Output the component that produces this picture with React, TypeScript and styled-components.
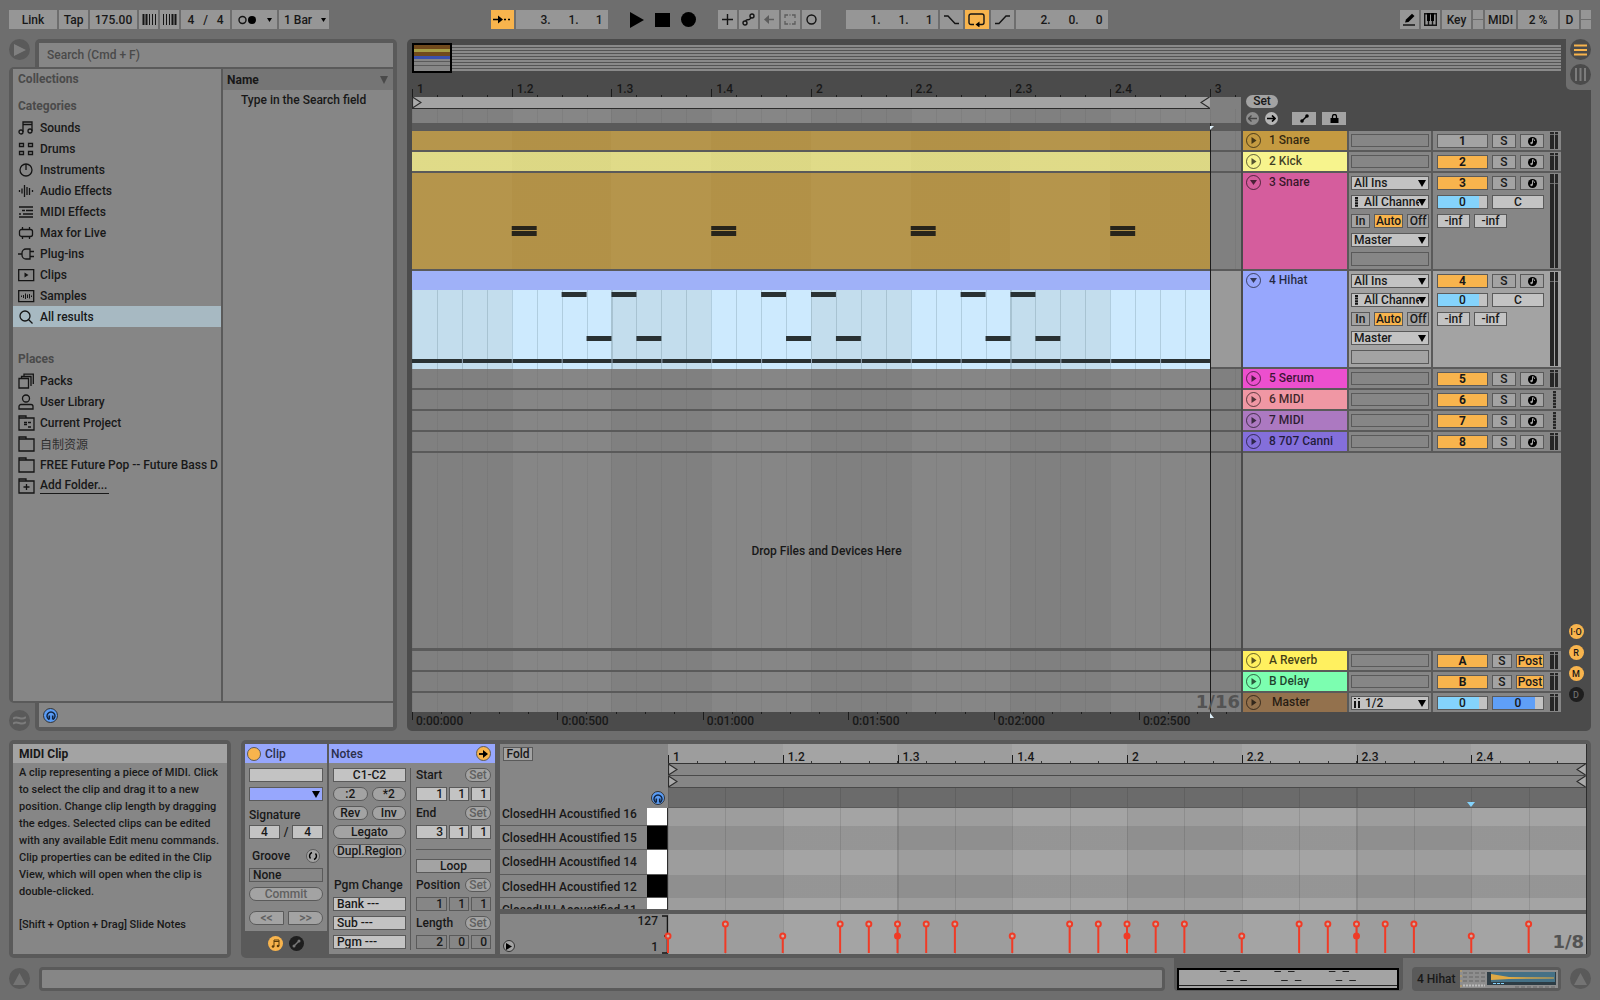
import React from "react";
import styled, { createGlobalStyle, css } from "styled-components";

const c = {
  page: "#6e6e6e",
  frame: "#5a5a5a",
  dark: "#4b4b4b",
  panel: "#868686",
  lane: "#808080",
  light: "#a3a3a3",
  field: "#c3c3c3",
  button: "#969696",
  orange: "#f8b44d",
  blue: "#97a7fd",
  sky: "#84d3fc",
  ink: "#181818",
};

const Global = createGlobalStyle`
  * { box-sizing: border-box; }
  body { margin: 0; background: ${c.page}; }
  body, button, input, select {
    font-family: Roboto, "Noto Sans CJK SC", sans-serif;
    font-size: 12px;
    font-weight: 500;
    color: ${c.ink};
  }
  button, input, select { margin: 0; padding: 0; border: 0; border-radius: 0; appearance: none; min-width: 0; }
  input:focus, select:focus, button:focus { outline: none; }
  svg { display: block; flex: none; }
  p { margin: 0; }
`;

const Page = styled.div`
  display: flex;
  flex-direction: column;
  min-height: 100vh;
  padding: 0 9px;
`;

/* ---------- control bar ---------- */

const ControlBar = styled.header`
  display: flex;
  padding: 10px 0;
`;
const Spacer = styled.div<{ $grow: number }>`
  flex: ${(p) => p.$grow} 1 0;
`;
const Group = styled.div`
  display: flex;
  gap: 2px;
`;
const BarButton = styled.button<{ $w: number; $on?: boolean }>`
  width: ${(p) => p.$w}px;
  height: 19px;
  display: flex;
  align-items: center;
  justify-content: center;
  white-space: nowrap;
  background: ${(p) => (p.$on ? c.orange : c.button)};
`;
const BarInput = styled.input<{ $w: number }>`
  width: ${(p) => p.$w}px;
  height: 19px;
  background: ${c.button};
  text-align: center;
`;
const BarFields = styled.div`
  display: flex;
  align-items: center;
  justify-content: flex-end;
  gap: 4px;
  width: 92px;
  height: 19px;
  padding-right: 5px;
  background: ${c.button};
`;
const BarDigit = styled.input<{ $w: number }>`
  width: ${(p) => p.$w}px;
  background: transparent;
  text-align: right;
`;
const BarSelectBox = styled.div`
  position: relative;
  width: 50px;
  height: 19px;
  background: ${c.button};
`;
const BarSelect = styled.select`
  width: 100%;
  height: 19px;
  padding-left: 5px;
  background: transparent;
`;
const ArrowOver = styled.span<{ $right: number }>`
  position: absolute;
  right: ${(p) => p.$right}px;
  top: 0;
  bottom: 0;
  display: flex;
  align-items: center;
  pointer-events: none;
`;
const TransportGroup = styled.div`
  display: flex;
  margin: 0 16px;
`;
const LoopGroup = styled(Group)`
  margin-left: 25px;
`;
const Transport = styled.button`
  width: 26px;
  height: 19px;
  background: transparent;
  display: flex;
  align-items: center;
  justify-content: center;
`;
const Leds = styled.div`
  display: flex;
  flex-direction: column;
  gap: 1px;
  width: 10px;
  span { flex: 1; background: ${c.button}; }
`;

const Down = ({ w = 8, h = 7, fill = "#000" }: { w?: number; h?: number; fill?: string }) => (
  <svg width={w} height={h} viewBox="0 0 8 7" preserveAspectRatio="none"><path d="M0 0h8L4 7z" fill={fill} /></svg>
);

const Digits = ({ label, values }: { label: string; values: string[] }) => (
  <BarFields>
    {values.map((v, i) => (
      <BarDigit key={i} $w={i === 2 ? 20 : 24} defaultValue={v} aria-label={`${label} ${i + 1}`} />
    ))}
  </BarFields>
);

const stroke = { fill: "none", stroke: "#141414", strokeWidth: 1.4 } as const;

function TopBar() {
  return (
    <ControlBar>
      <Group>
        <BarButton $w={48}>Link</BarButton>
        <BarButton $w={29}>Tap</BarButton>
        <BarInput $w={47} defaultValue="175.00" aria-label="Tempo" />
        <BarButton $w={19} aria-label="Nudge down">
          <svg width="14" height="11"><path d="M1.5 0v11M4.5 0v11" stroke="#141414" strokeWidth="2" /><path d="M7.5 0v11M10.5 0v11M13.5 0v11" stroke="#141414" /></svg>
        </BarButton>
        <BarButton $w={19} aria-label="Nudge up">
          <svg width="14" height="11"><path d="M.5 0v11M3.5 0v11M6.5 0v11" stroke="#141414" /><path d="M9.5 0v11M12.5 0v11" stroke="#141414" strokeWidth="2" /></svg>
        </BarButton>
        <BarInput $w={49} defaultValue="4   /   4" aria-label="Time signature" />
        <BarButton $w={45} aria-label="Metronome">
          <svg width="34" height="10"><circle cx="4.5" cy="5" r="3.5" {...stroke} /><circle cx="14" cy="5" r="4" /><path d="M29 3h5l-2.5 4z" /></svg>
        </BarButton>
        <BarSelectBox>
          <BarSelect aria-label="Quantization"><option>1 Bar</option></BarSelect>
          <ArrowOver $right={3}><Down w={5} h={4} /></ArrowOver>
        </BarSelectBox>
      </Group>
      <Spacer $grow={162} />
      <Group>
        <BarButton $w={23} $on aria-label="Follow">
          <svg width="18" height="9"><path d="M0 4.5h7M11 4.5h2M15 4.5h2" stroke="#000" strokeWidth="1.5" /><path d="M5 .5l5 4-5 4z" /></svg>
        </BarButton>
        <Digits label="Position" values={["3.", "1.", "1"]} />
      </Group>
      <TransportGroup>
        <Transport aria-label="Play"><svg width="14" height="16"><path d="M0 0l14 8-14 8z" /></svg></Transport>
        <Transport aria-label="Stop"><svg width="15" height="14"><path d="M0 0h15v14H0z" /></svg></Transport>
        <Transport aria-label="Record"><svg width="15" height="15"><circle cx="7.5" cy="7.5" r="7.5" /></svg></Transport>
      </TransportGroup>
      <Group>
        <BarButton $w={19} aria-label="Overdub"><svg width="11" height="11"><path d="M5.5 0v11M0 5.5h11" {...stroke} /></svg></BarButton>
        <BarButton $w={19} aria-label="Automation arm"><svg width="13" height="13"><circle cx="3" cy="10" r="2" {...stroke} /><circle cx="10" cy="3" r="2" {...stroke} /><path d="M3.5 8C5 5 7 9 9 4.5" {...stroke} /></svg></BarButton>
        <BarButton $w={19} aria-label="Re-enable automation"><svg width="10" height="9"><path d="M3 4.5h7" stroke="#5c5c5c" strokeWidth="1.5" /><path d="M5 0v9L0 4.5z" fill="#5c5c5c" /></svg></BarButton>
        <BarButton $w={19} aria-label="Capture"><svg width="12" height="11"><path d="M1 4V1h3M8 1h3v3M11 7v3H8M4 10H1V7M5.5 1h1M5.5 10h1" fill="none" stroke="#5c5c5c" strokeWidth="1.3" /></svg></BarButton>
        <BarButton $w={19} aria-label="Session record"><svg width="11" height="11"><circle cx="5.5" cy="5.5" r="4.5" {...stroke} /></svg></BarButton>
      </Group>
      <LoopGroup>
        <Digits label="Loop start" values={["1.", "1.", "1"]} />
        <BarButton $w={23} aria-label="Punch in"><svg width="15" height="10"><path d="M0 1h4l7 7.5h4" {...stroke} /></svg></BarButton>
        <BarButton $w={24} $on aria-label="Loop"><svg width="17" height="14"><path d="M6 11.500H3a2 2 0 0 1-2-2V3a2 2 0 0 1 2-2h11a2 2 0 0 1 2 2v6.500a2 2 0 0 1-2 2h-4" {...stroke} /><path d="M11.500 8.500v6L7.500 11.500z" /></svg></BarButton>
        <BarButton $w={23} aria-label="Punch out"><svg width="15" height="10"><path d="M0 8.5h4L11 1h4" {...stroke} /></svg></BarButton>
        <Digits label="Loop length" values={["2.", "0.", "0"]} />
      </LoopGroup>
      <Spacer $grow={293} />
      <Group>
        <BarButton $w={19} aria-label="Draw mode"><svg width="13" height="13"><path d="M2 9.500l1-3L9 .8l2.500 2.200-6 6z" /><path d="M0 12h12" stroke="#000" strokeWidth="1.3" /></svg></BarButton>
        <BarButton $w={19} aria-label="Computer keyboard"><svg width="13" height="13"><path d="M.7.7h11.600v11.600H.7zM4.500 7v5M8.500 7v5" {...stroke} /><path d="M3 0h3v8H3zM7 0h3v8H7z" /></svg></BarButton>
        <BarButton $w={29}>Key</BarButton>
        <Leds><span /><span /></Leds>
        <BarButton $w={31}>MIDI</BarButton>
        <BarButton $w={40}>2 %</BarButton>
        <BarButton $w={19}>D</BarButton>
        <Leds><span /><span /></Leds>
      </Group>
    </ControlBar>
  );
}

/* ---------- browser ---------- */

const Workspace = styled.main`
  display: flex;
  flex: 1;
  gap: 10px;
`;
const Browser = styled.section`
  display: flex;
  flex-direction: column;
  width: 388px;
  flex: none;
`;
const BrowserEdge = styled.div<{ $end?: boolean }>`
  display: flex;
  gap: 5px;
  align-items: ${(p) => (p.$end ? "flex-end" : "flex-start")};
`;
const EdgeFrame = styled.div<{ $end?: boolean }>`
  flex: 1;
  padding: ${(p) => (p.$end ? "0 4px 4px" : "4px 4px 0")};
  background: ${c.frame};
  border-radius: ${(p) => (p.$end ? "0 0 5px 5px" : "5px 5px 0 0")};
`;
const Search = styled.input`
  display: block;
  width: 100%;
  height: 24px;
  padding: 0 8px;
  background: ${c.panel};
  &::placeholder { color: #4a4a4a; opacity: 1; }
`;
const FooterBox = styled.div`
  display: flex;
  align-items: center;
  height: 24px;
  padding-left: 4px;
  background: ${c.panel};
`;
const Round = styled.button<{ $size: number; $bg: string; $line?: string }>`
  display: flex;
  align-items: center;
  justify-content: center;
  flex: none;
  width: ${(p) => p.$size}px;
  height: ${(p) => p.$size}px;
  border-radius: 50%;
  background: ${(p) => p.$bg};
  border: ${(p) => (p.$line ? `1px solid ${p.$line}` : "0")};
  font-size: 9px;
`;
const DarkRound = styled(Round)`
  color: #6a6a6a;
`;
const BrowserBody = styled.div`
  display: flex;
  flex: 1;
  gap: 2px;
  padding: 2px 4px;
  background: ${c.frame};
  border-radius: 5px 0 0 5px;
`;
const Sidebar = styled.nav`
  width: 208px;
  background: ${c.panel};
`;
const SideTitle = styled.div<{ $h: number }>`
  height: ${(p) => p.$h}px;
  padding-left: 5px;
  line-height: 20px;
  color: #4a4a4a;
  font-weight: 700;
`;
const SideLink = styled.a<{ $on?: boolean; $thin?: boolean }>`
  display: flex;
  align-items: center;
  gap: 5px;
  height: 21px;
  padding-left: 5px;
  white-space: nowrap;
  text-decoration: none;
  font-weight: ${(p) => (p.$thin ? 400 : 500)};
  color: ${(p) => (p.$thin ? "#303030" : c.ink)};
  background: ${(p) => (p.$on ? "#a7b9c2" : "transparent")};
`;
const AddLabel = styled.span`
  padding: 1px 2px 0 0;
  border-bottom: 1px solid ${c.ink};
  line-height: 15px;
`;
const SideGap = styled.div`
  height: 22px;
`;
const Results = styled.div`
  flex: 1;
  background: ${c.panel};
`;
const ResultsHead = styled.div`
  display: flex;
  align-items: center;
  justify-content: space-between;
  height: 21px;
  padding: 0 5px 0 4px;
  background: #757575;
  font-weight: 700;
`;
const ResultsHint = styled.div`
  padding-left: 18px;
  line-height: 20px;
`;

const folder = "M1 15V1h7v2h8v12zM1 3h7";
const icons: Record<string, React.ReactNode> = {
  Sounds: <><circle cx="3" cy="12" r="2" /><circle cx="12" cy="11" r="2" /><path d="M5 12V2h9v9M5 4.500h9" /></>,
  Drums: <path d="M1.500 2.500h4v3h-4zM10.500 2.500h4v3h-4zM1.500 10.500h4v3h-4zM10.500 10.500h4v3h-4z" />,
  Instruments: <><circle cx="8" cy="8" r="6" /><path d="M8 2v6" /></>,
  "Audio Effects": <path d="M1.500 7v2M4 5.500v5M6.500 2v12M9 4v8M11.500 5v7M14.500 7v2" />,
  "MIDI Effects": <path d="M1 3h14M1 13h14M4 6.500h3M8 6.500h7M5 10h10M1 10h2" />,
  "Max for Live": <path d="M3.500 4.500h9a2 2 0 0 1 2 2v3a2 2 0 0 1-2 2h-9a2 2 0 0 1-2-2v-3a2 2 0 0 1 2-2zM4.500 2v2.500M11.500 2v2.500M4.500 11.500V14M11.500 11.500V14" />,
  "Plug-ins": <path d="M0 8h4M12 3H8a4 4 0 0 0-4 4v2a4 4 0 0 0 4 4h4zM12 5.500h4M12 10.500h4" />,
  Clips: <><path d="M.7 2.700h15v11H.7z" /><path d="M6.500 5.500v5L10.500 8z" fill="#141414" stroke="none" /></>,
  Samples: <><path d="M.7 2.700h15v11H.7z" /><path d="M3.500 7.500v1.500M5.500 7v3M7.500 5.500v5.500M9.500 6.500v3.500M11.500 6v4.500M13.500 7.500v1.500" strokeWidth="1" /></>,
  "All results": <><circle cx="7" cy="7" r="5" /><path d="M10.500 10.500l4 4" /></>,
  Packs: <path d="M1 5.500h9.500V15H1zM3.500 5.500V3.500H13V13M6 3.500V1.200h9.300V11" />,
  "User Library": <><circle cx="8" cy="4.500" r="3.500" /><path d="M1 15v-2.500a2 2 0 0 1 2-2h10a2 2 0 0 1 2 2V15z" /></>,
  "Current Project": <><path d={folder} /><path d="M6 7.500h3M10 7.500h3M6 9.500h3M10 12h3" /></>,
  自制资源: <path d={folder} />,
  "FREE Future Pop -- Future Bass D": <path d={folder} />,
  "Add Folder...": <><path d={folder} /><path d="M8.500 6v6M5.500 9h6" /></>,
};
const SideIcon = ({ name }: { name: string }) => (
  <svg width="17" height="16" viewBox="0 0 17 16" fill="none" stroke="#141414" strokeWidth="1.3">{icons[name]}</svg>
);
const Headphones = ({ size }: { size: number }) => (
  <Round $size={size} $bg="#5a9cf5" $line="#333" aria-label="Preview">
    <svg width="10" height="10" fill="none" stroke="#10233f" strokeWidth="1.4"><path d="M3 9.500A4 4 0 1 1 7 9.500" /><path d="M3.300 5.500v4M6.700 5.500v4" strokeWidth="1.600" /></svg>
  </Round>
);

function BrowserPane() {
  return (
    <Browser>
      <BrowserEdge>
        <Round $size={21} $bg={c.frame} aria-label="Hide browser"><svg width="13" height="12"><path d="M1 0l12 6-12 6z" fill="#808080" /></svg></Round>
        <EdgeFrame><Search placeholder="Search (Cmd + F)" aria-label="Search" /></EdgeFrame>
      </BrowserEdge>
      <BrowserBody>
        <Sidebar>
          <SideTitle $h={27}>Collections</SideTitle>
          <SideTitle $h={21}>Categories</SideTitle>
          {["Sounds", "Drums", "Instruments", "Audio Effects", "MIDI Effects", "Max for Live", "Plug-ins", "Clips", "Samples", "All results"].map((n) => (
            <SideLink key={n} href="#" $on={n === "All results"}><SideIcon name={n} />{n}</SideLink>
          ))}
          <SideGap />
          <SideTitle $h={21}>Places</SideTitle>
          {["Packs", "User Library", "Current Project", "自制资源", "FREE Future Pop -- Future Bass D"].map((n) => (
            <SideLink key={n} href="#" $thin={n === "自制资源"}><SideIcon name={n} />{n}</SideLink>
          ))}
          <SideLink href="#"><SideIcon name="Add Folder..." /><AddLabel>Add Folder...</AddLabel></SideLink>
        </Sidebar>
        <Results>
          <ResultsHead>Name<Down w={8} h={8} fill="#4a4a4a" /></ResultsHead>
          <ResultsHint>Type in the Search field</ResultsHint>
        </Results>
      </BrowserBody>
      <BrowserEdge $end>
        <Round $size={21} $bg={c.frame} aria-label="Groove pool"><svg width="13" height="11" fill="none" stroke="#7c7c7c" strokeWidth="2"><path d="M0 4c4-5 8 3 13-2M0 9c4-5 8 3 13-2" /></svg></Round>
        <EdgeFrame $end><FooterBox><Headphones size={15} /></FooterBox></EdgeFrame>
      </BrowserEdge>
    </Browser>
  );
}

/* ---------- arrangement ---------- */

const Arrangement = styled.section`
  display: flex;
  flex: 1;
  min-width: 0;
  background: ${c.dark};
  border-radius: 5px;
`;
const ArrMain = styled.div`
  flex: 1;
  min-width: 0;
  display: flex;
  flex-direction: column;
  padding: 4px 0 0 5px;
`;
const SideStrip = styled.div`
  display: flex;
  flex-direction: column;
  justify-content: space-between;
  width: 30px;
`;
const ViewSwitch = styled.div`
  display: flex;
  flex-direction: column;
  align-items: flex-end;
  gap: 4px;
  height: 51px;
  margin-left: 5px;
  background: ${c.page};
  border-bottom-left-radius: 5px;
`;
const SectionToggles = styled.div`
  display: flex;
  flex-direction: column;
  align-items: center;
  gap: 6px;
  padding-bottom: 29px;
`;
const Overview = styled.div`
  display: flex;
  align-items: center;
  height: 30px;
`;
const OverviewView = styled.div`
  width: 40px;
  height: 30px;
  border: 2px solid #000;
  background: linear-gradient(#714a1c 0 4px, #a59c45 4px 7px, #714a1c 7px 11px, #3b50ab 11px 14px, ${c.panel} 14px 16px, ${c.frame} 16px 17px, ${c.panel} 17px 20px, ${c.frame} 20px 21px, ${c.panel} 21px 26px);
`;
const OverviewStrips = styled.div`
  flex: 1;
  height: 26px;
  background: repeating-linear-gradient(#8a8a8a 0 2px, #555 2px 3px);
`;
const Columns = styled.div`
  display: flex;
  gap: 2px;
  flex: 1;
`;
const Timeline = styled.div`
  position: relative;
  display: flex;
  flex-direction: column;
  flex: 1;
  min-width: 0;
`;

/* One beat is 12.03% of the visible timeline, one sixteenth a quarter of that. */
const grid = css`
  background-image:
    repeating-linear-gradient(90deg, rgba(0, 0, 0, 0.05) 0 1px, transparent 1px 3.0075%),
    repeating-linear-gradient(90deg, ${c.lane} 0 12.03%, ${c.panel} 12.03% 24.06%);
`;
const Ruler = styled.div`
  display: flex;
  align-items: flex-end;
  height: 24px;
  overflow: hidden;
  background: repeating-linear-gradient(90deg, #1c1c1c 0 1px, transparent 1px 3.0075%) bottom / 100% 2px no-repeat;
`;
const Mark = styled.span<{ $w: string }>`
  flex: none;
  width: ${(p) => p.$w};
  height: 15px;
  padding-left: 5px;
  line-height: 15px;
  white-space: nowrap;
  background: linear-gradient(#1c1c1c, #1c1c1c) left bottom / 1px 8px no-repeat;
`;
const LoopRow = styled.div`
  display: flex;
  height: 12px;
  background: ${c.lane};
`;
const LoopBrace = styled.div`
  display: flex;
  justify-content: space-between;
  width: 96.26%;
  background: ${c.light};
  border-bottom: 1px solid #2c2c2c;
`;
const GridRow = styled.div`
  height: 14px;
  ${grid}
`;
const Locators = styled.div`
  height: 8px;
  background: ${c.frame};
`;
const Lanes = styled.div`
  display: flex;
  flex-direction: column;
  gap: 2px;
  flex: 1;
  background: ${c.frame};
`;
const Lane = styled.div<{ $h: number; $sel?: boolean }>`
  height: ${(p) => p.$h}px;
  ${grid}
  ${(p) => p.$sel && "background: #9a9a9a;"}
`;
const EmptyLane = styled.div`
  flex: 1;
  display: flex;
  align-items: center;
  justify-content: center;
  margin-bottom: 1px;
  ${grid}
`;
const Clip = styled.div<{ $bg: string }>`
  width: 96.26%;
  height: 100%;
  background: repeating-linear-gradient(90deg, rgba(255, 255, 255, 0.02) 0 12.5%, rgba(0, 0, 0, 0.01) 12.5% 25%) ${(p) => p.$bg};
`;
const HihatClip = styled.div`
  display: flex;
  flex-direction: column;
  width: 96.26%;
  height: 98px;
`;
const HihatHead = styled.div`
  height: 19px;
  background: #9fb1f8;
`;
const HihatBody = styled.div`
  flex: 1;
  background:
    repeating-linear-gradient(90deg, rgba(60, 90, 100, 0.2) 0 1px, transparent 1px 3.125%),
    repeating-linear-gradient(90deg, #c3dded 0 12.5%, #cdeafe 12.5% 25%);
`;
const Insert = styled.div`
  position: absolute;
  left: 96.26%;
  top: 50px;
  bottom: 19px;
  width: 1px;
  background: #1c1c1c;
`;
const InsertTip = styled.svg<{ $top?: boolean }>`
  position: absolute;
  left: 0;
  ${(p) => (p.$top ? "top: 3px;" : "bottom: -6px;")}
`;
const Quantum = styled.span<{ $right: number; $bottom: number }>`
  position: absolute;
  right: ${(p) => p.$right}px;
  bottom: ${(p) => p.$bottom}px;
  color: #535353;
  font-family: "DejaVu Sans", sans-serif;
  font-size: 18px;
  font-weight: 700;
  line-height: 20px;
`;
const TimeRuler = styled.div`
  display: flex;
  height: 19px;
  overflow: hidden;
  background: repeating-linear-gradient(90deg, #1c1c1c 0 1px, transparent 1px 3.508%) top / 100% 2px no-repeat;
`;
const TimeMark = styled.span`
  flex: none;
  width: 17.54%;
  padding-left: 4px;
  line-height: 18px;
  background: linear-gradient(#1c1c1c, #1c1c1c) left top / 1px 8px no-repeat;
`;

const Brace = ({ flip }: { flip?: boolean }) => (
  <svg width="10" height="11"><path d={flip ? "M9.500 0L1 5.500l8.500 5.500" : "M.5 0L9 5.500.5 11z"} fill="#aaa" stroke="#2c2c2c" strokeWidth="1.200" /></svg>
);
const beatX = (b: number) => `${b * 12.5}%`;

/* ---------- mixer ---------- */

const Mixer = styled.div`
  display: flex;
  flex-direction: column;
  width: 318px;
  flex: none;
`;
const MixerHead = styled.div`
  display: flex;
  flex-direction: column;
  align-items: flex-start;
  gap: 4px;
  height: 58px;
  padding: 22px 0 0 3px;
`;
const SetTop = styled.button`
  width: 32px;
  height: 13px;
  line-height: 13px;
  border-radius: 7px;
  background: ${c.light};
`;
const HeadRow = styled.div`
  display: flex;
  gap: 6px;
`;
const HeadButton = styled.button`
  display: flex;
  align-items: center;
  justify-content: center;
  width: 24px;
  height: 13px;
  background: ${c.light};
`;
const HeadButtons = styled.div`
  display: flex;
  gap: 6px;
  padding-left: 8px;
`;
const TrackList = styled.div`
  display: flex;
  flex-direction: column;
  gap: 2px;
  flex: 1;
  background: ${c.frame};
`;
const MixerEmpty = styled.div`
  flex: 1;
  margin-bottom: 1px;
  background: ${c.panel};
`;
const MixerFoot = styled.div`
  height: 19px;
`;
const TrackRow = styled.div<{ $h: number }>`
  display: flex;
  gap: 2px;
  height: ${(p) => p.$h}px;
`;
const TrackName = styled.div<{ $bg: string; $indent?: boolean }>`
  display: flex;
  flex: none;
  gap: ${(p) => (p.$indent ? 11 : 8)}px;
  width: 104px;
  padding: 2px 0 0 3px;
  background: ${(p) => p.$bg};
  color: rgba(0, 0, 0, 0.75);
  line-height: 14px;
  white-space: nowrap;
`;
const Cell = styled.div<{ $sel?: boolean }>`
  display: flex;
  flex-direction: column;
  gap: 5px;
  flex: none;
  width: 82px;
  padding: 3px 2px;
  background: ${(p) => (p.$sel ? c.light : c.panel)};
`;
const MixCell = styled.div<{ $sel?: boolean }>`
  display: flex;
  justify-content: space-between;
  flex: 1;
  padding: 0 3px 0 4px;
  background: ${(p) => (p.$sel ? c.light : c.panel)};
`;
const MixControls = styled.div`
  display: flex;
  flex-direction: column;
  gap: 5px;
  padding-top: 3px;
`;
const Line = styled.div<{ $gap?: number; $between?: boolean }>`
  display: flex;
  gap: ${(p) => p.$gap ?? 4}px;
  align-items: center;
  justify-content: ${(p) => (p.$between ? "space-between" : "flex-start")};
  height: 14px;
`;
const boxBase = css`
  height: 14px;
  border: 1px solid ${c.frame};
  line-height: 12px;
`;
const Blank = styled.div`
  ${boxBase}
`;
const Toggle = styled.button<{ $w?: number; $on?: boolean; $dim?: boolean; $bold?: boolean }>`
  ${boxBase}
  display: flex;
  align-items: center;
  justify-content: center;
  width: ${(p) => (p.$w ? `${p.$w}px` : "100%")};
  background: ${(p) => (p.$on ? c.orange : c.light)};
  color: ${(p) => (p.$dim ? "#606060" : c.ink)};
  font-weight: ${(p) => (p.$bold ? 700 : 500)};
  white-space: nowrap;
`;
const Pill = styled(Toggle)<{ $shape?: string }>`
  border-radius: ${(p) => p.$shape ?? "7px"};
`;
const Field = styled.input<{ $w?: number; $bg?: string; $align?: string }>`
  ${boxBase}
  width: ${(p) => (p.$w ? `${p.$w}px` : "100%")};
  padding: 0 3px;
  background: ${(p) => p.$bg ?? c.field};
  text-align: ${(p) => p.$align ?? "center"};
`;
const SelectBox = styled.div<{ $bg?: string }>`
  ${boxBase}
  position: relative;
  display: flex;
  align-items: center;
  background: ${(p) => p.$bg ?? c.field};
  padding-left: 2px;
  gap: 5px;
`;
const Select = styled.select`
  flex: 1;
  height: 12px;
  margin-right: 9px;
  background: transparent;
  line-height: 12px;
`;
const Meter = styled.div<{ $midi?: boolean; $notch: number }>`
  display: flex;
  gap: 1px;
  width: 8px;
  justify-content: center;
  padding: 1px 0;
  span {
    width: ${(p) => (p.$midi ? 3 : 4)}px;
    background: ${(p) =>
      p.$midi
        ? "repeating-linear-gradient(#262626 0 2px, #666 2px 3px)"
        : `linear-gradient(#262626 0 ${p.$notch}px, #6a6a6a ${p.$notch}px ${p.$notch + 1}px, #262626 ${p.$notch + 1}px)`};
  }
`;

const Dots = () => (
  <svg width="5" height="10"><path d="M2.500 0v10" stroke="#141414" strokeWidth="3" strokeDasharray="2 .6" /></svg>
);
const Unfold = ({ open }: { open?: boolean }) => (
  <Round $size={15} $bg="transparent" $line="rgba(0,0,0,.6)" aria-label={open ? "Fold track" : "Unfold track"}>
    <svg width="9" height="9"><path d={open ? "M1 2h7L4.500 7z" : "M2.500 1v7l5-3.500z"} fill="rgba(0,0,0,.65)" /></svg>
  </Round>
);
const Arm = () => (
  <svg width="9" height="9"><circle cx="4.500" cy="4.500" r="4.500" /><circle cx="3.500" cy="6" r="1.200" fill="#a3a3a3" /><path d="M4.500 6V1.500c1 0 2 1 2 2.500" stroke="#a3a3a3" fill="none" /></svg>
);

type Track = { id: string; name: string; color: string; open?: boolean; off?: boolean; sel?: boolean; midi?: boolean; ret?: boolean };
const tracks: Track[] = [
  { id: "1", name: "1 Snare", color: "#c49a41", off: true },
  { id: "2", name: "2 Kick", color: "#f7f48d" },
  { id: "3", name: "3 Snare", color: "#d55d9d", open: true },
  { id: "4", name: "4 Hihat", color: c.blue, open: true, sel: true },
  { id: "5", name: "5 Serum", color: "#ec4fce" },
  { id: "6", name: "6 MIDI", color: "#f097a4", midi: true },
  { id: "7", name: "7 MIDI", color: "#ac79c1", midi: true },
  { id: "8", name: "8 707 Canni", color: "#846fdb" },
];
const returns: Track[] = [
  { id: "A", name: "A Reverb", color: "#fff05f", ret: true },
  { id: "B", name: "B Delay", color: "#7cfeb0", ret: true },
];

function TrackHeader({ t }: { t: Track }) {
  return (
    <TrackRow $h={t.open ? 96 : 19}>
      <TrackName $bg={t.color}><Unfold open={t.open} />{t.name}</TrackName>
      <Cell $sel={t.sel}>
        {t.open && (
          <>
            <SelectBox>
              <Select aria-label={`${t.name} input`}><option>All Ins</option></Select>
              <ArrowOver $right={2}><Down /></ArrowOver>
            </SelectBox>
            <SelectBox>
              <Dots />
              <Select aria-label={`${t.name} channel`}><option>All Channe</option></Select>
              <ArrowOver $right={2}><Down /></ArrowOver>
            </SelectBox>
            <Line $between>
              <Toggle $w={19}>In</Toggle><Toggle $w={30} $on>Auto</Toggle><Toggle $w={22}>Off</Toggle>
            </Line>
            <SelectBox>
              <Select aria-label={`${t.name} output`}><option>Master</option></Select>
              <ArrowOver $right={2}><Down /></ArrowOver>
            </SelectBox>
          </>
        )}
        <Blank />
      </Cell>
      <MixCell $sel={t.sel}>
        <MixControls>
          <Line>
            <Toggle $w={51} $on={!t.off} $bold>{t.id}</Toggle>
            <Toggle $w={t.ret ? 20 : 24}>S</Toggle>
            {t.ret ? <Toggle $w={28} $on>Post</Toggle> : <Toggle $w={24} aria-label="Arm"><Arm /></Toggle>}
          </Line>
          {t.open && (
            <>
              <Line>
                <Field $w={51} $bg={`linear-gradient(90deg, ${c.sky} 84%, ${c.field} 84%)`} defaultValue="0" aria-label="Volume" />
                <Field $w={52} defaultValue="C" aria-label="Pan" />
              </Line>
              <Line>
                <Field $w={33} defaultValue="-inf" aria-label="Send A" />
                <Field $w={33} defaultValue="-inf" aria-label="Send B" />
              </Line>
            </>
          )}
        </MixControls>
        <Meter $midi={t.midi} $notch={t.open ? 9 : 2}><span />{!t.midi && <span />}</Meter>
      </MixCell>
    </TrackRow>
  );
}

function MixerPane() {
  return (
    <Mixer>
      <MixerHead>
        <SetTop>Set</SetTop>
        <HeadRow>
          <Round $size={13} $bg="#8c8c8c" aria-label="Previous locator"><svg width="9" height="7"><path d="M0 3.500h9M3.500.500l-3 3 3 3" fill="none" stroke="#444" strokeWidth="1.300" /></svg></Round>
          <Round $size={13} $bg="#b5b5b5" aria-label="Next locator"><svg width="9" height="7"><path d="M0 3.500h8M5 .5l3 3-3 3" fill="none" stroke="#000" strokeWidth="1.700" /></svg></Round>
          <HeadButtons>
            <HeadButton aria-label="Automation mode"><svg width="9" height="9"><path d="M2 7l5-5" stroke="#000" strokeWidth="1.400" /><circle cx="2" cy="7" r="1.800" /><circle cx="7" cy="2" r="1.800" /></svg></HeadButton>
            <HeadButton aria-label="Lock envelopes"><svg width="9" height="9"><path d="M.5 4h8v5h-8z" /><path d="M2.500 4V2.500a2 2 0 0 1 4 0V4" fill="none" stroke="#000" strokeWidth="1.300" /></svg></HeadButton>
          </HeadButtons>
        </HeadRow>
      </MixerHead>
      <TrackList>
        {tracks.map((t) => <TrackHeader key={t.id} t={t} />)}
        <MixerEmpty />
        {returns.map((t) => <TrackHeader key={t.id} t={t} />)}
        <TrackRow $h={19}>
          <TrackName $bg="#93714d" $indent><Unfold />Master</TrackName>
          <Cell>
            <SelectBox>
              <svg width="6" height="10"><path d="M1 0v1M1 3v7M5 0v1M5 3v7" stroke="#141414" strokeWidth="2" /></svg>
              <Select aria-label="Master output"><option>1/2</option></Select>
              <ArrowOver $right={2}><Down /></ArrowOver>
            </SelectBox>
          </Cell>
          <MixCell>
            <MixControls>
              <Line>
                <Field $w={51} $bg={`linear-gradient(90deg, ${c.sky} 84%, ${c.field} 84%)`} defaultValue="0" aria-label="Master volume" />
                <Field $w={52} $bg={`linear-gradient(90deg, #5f9ff7 84%, ${c.field} 84%)`} defaultValue="0" aria-label="Cue volume" />
              </Line>
            </MixControls>
            <Meter $notch={2}><span /><span /></Meter>
          </MixCell>
        </TrackRow>
      </TrackList>
      <MixerFoot />
    </Mixer>
  );
}

const labels = ["1", "1.2", "1.3", "1.4", "2", "2.2", "2.3", "2.4"];
const hatStarts = [1.5, 3.5, 5.5];

function ArrangementPane() {
  return (
    <Arrangement>
      <ArrMain>
        <Overview><OverviewView /><OverviewStrips /></Overview>
        <Columns>
          <Timeline>
            <Ruler>{[...labels, "3"].map((l) => <Mark key={l} $w={l === "3" ? "3%" : "12.03%"}>{l}</Mark>)}</Ruler>
            <LoopRow><LoopBrace><Brace /><Brace flip /></LoopBrace></LoopRow>
            <GridRow />
            <Locators />
            <Lanes>
              <Lane $h={19}><Clip $bg="#b49348" /></Lane>
              <Lane $h={19}><Clip $bg="#dfda86" /></Lane>
              <Lane $h={96}>
                <Clip $bg="#b49348">
                  <svg width="100%" height="96">
                    {[1, 3, 5, 7].map((b) => (
                      <g key={b} fill="#27241b">
                        <rect x={beatX(b)} y="53" width="3.125%" height="4" />
                        <rect x={beatX(b)} y="58" width="3.125%" height="5" />
                      </g>
                    ))}
                  </svg>
                </Clip>
              </Lane>
              <Lane $h={96} $sel>
                <HihatClip>
                  <HihatHead />
                  <HihatBody>
                    <svg width="100%" height="79" fill="#293133">
                      {hatStarts.map((b) => (
                        <g key={b}>
                          <rect x={beatX(b)} y="2" width="3.125%" height="5" />
                          <rect x={beatX(b + 0.5)} y="2" width="3.125%" height="5" />
                          <rect x={beatX(b + 0.25)} y="46" width="3.125%" height="5" />
                          <rect x={beatX(b + 0.75)} y="46" width="3.125%" height="5" />
                        </g>
                      ))}
                      <rect x="0" y="69" width="100%" height="4" />
                      {Array.from({ length: 15 }, (_, i) => (
                        <rect key={i} x={beatX((i + 1) / 2)} y="69" width="1" height="4" fill="#9ab" />
                      ))}
                    </svg>
                  </HihatBody>
                </HihatClip>
              </Lane>
              <Lane $h={19} /><Lane $h={19} /><Lane $h={19} /><Lane $h={19} />
              <EmptyLane>Drop Files and Devices Here</EmptyLane>
              <Lane $h={19} /><Lane $h={19} /><Lane $h={19} />
            </Lanes>
            <TimeRuler>{["0:00:000", "0:00:500", "0:01:000", "0:01:500", "0:02:000", "0:02:500"].map((t) => <TimeMark key={t}>{t}</TimeMark>)}</TimeRuler>
            <Insert>
              <InsertTip $top width="4" height="4"><path d="M0 0h4L0 4z" fill="#dff1fb" /></InsertTip>
              <InsertTip width="4" height="5"><path d="M0 0l4 5H0z" fill="#dff1fb" /></InsertTip>
            </Insert>
            <Quantum $right={1} $bottom={19}>1/16</Quantum>
          </Timeline>
          <MixerPane />
        </Columns>
      </ArrMain>
      <SideStrip>
        <ViewSwitch>
          <Round $size={21} $bg={c.dark} aria-label="Arrangement view"><svg width="13" height="12"><path d="M0 1.500h13M0 6h13M0 10.500h13" stroke={c.orange} strokeWidth="2" /></svg></Round>
          <Round $size={21} $bg={c.dark} aria-label="Session view"><svg width="11" height="13"><path d="M1 0v13M5.500 0v13M10 0v13" stroke="#7c7c7c" strokeWidth="2" /></svg></Round>
        </ViewSwitch>
        <SectionToggles>
          <Round $size={15} $bg={c.orange}>I·O</Round>
          <Round $size={15} $bg={c.orange}>R</Round>
          <Round $size={15} $bg={c.orange}>M</Round>
          <DarkRound $size={15} $bg="#1e1e1e">D</DarkRound>
        </SectionToggles>
      </SideStrip>
    </Arrangement>
  );
}

/* ---------- detail view ---------- */

const Detail = styled.div`
  display: flex;
  gap: 10px;
  height: 218px;
  margin-top: 9px;
`;
const Info = styled.aside`
  width: 222px;
  flex: none;
  padding: 4px;
  background: ${c.frame};
  border-radius: 5px;
`;
const InfoTitle = styled.div`
  height: 19px;
  padding-left: 6px;
  line-height: 20px;
  background: ${c.light};
  font-weight: 700;
`;
const InfoText = styled.div`
  display: flex;
  flex-direction: column;
  gap: 16px;
  height: 191px;
  padding: 1px 6px;
  background: ${c.panel};
  font-size: 11px;
  line-height: 17px;
  white-space: nowrap;
`;
const ClipFrame = styled.section`
  display: flex;
  flex: 1;
  min-width: 0;
  gap: 2px;
  padding: 4px;
  background: ${c.frame};
  border-radius: 5px;
`;
const ClipColumn = styled.div`
  width: 82px;
  flex: none;
`;
const BoxHead = styled.div`
  display: flex;
  flex: none;
  align-items: center;
  gap: 4px;
  height: 19px;
  padding: 0 4px 0 2px;
  background: ${c.blue};
  color: #2b2f4c;
`;
const BoxTitle = styled.span`
  flex: 1;
`;
const ClipBody = styled.div`
  display: flex;
  flex-direction: column;
  gap: 5px;
  height: 168px;
  padding: 5px 4px;
  background: ${c.panel};
`;
const Label = styled.span<{ $line?: number }>`
  height: 14px;
  line-height: ${(p) => p.$line ?? 14}px;
  white-space: nowrap;
`;
const TabRow = styled.div`
  display: flex;
  justify-content: center;
  gap: 6px;
  padding-top: 5px;
`;
const GrooveLine = styled(Line)`
  margin: 5px 3px 0;
`;
const NudgeLine = styled(Line)`
  margin-top: 5px;
`;
const NotesColumn = styled.div`
  display: flex;
  flex-direction: column;
  width: 166px;
  flex: none;
`;
const NotesBody = styled.div`
  display: flex;
  gap: 4px;
  flex: 1;
  padding: 5px 4px 4px;
  background: ${c.panel};
`;
const NotesLeft = styled.div`
  display: flex;
  flex-direction: column;
  gap: 5px;
  width: 74px;
`;
const NotesRight = styled.div`
  display: flex;
  flex-direction: column;
  gap: 5px;
  flex: 1;
  padding-left: 5px;
  border-left: 1px solid ${c.frame};
`;
const PgmLabel = styled(Label)`
  margin-top: 15px;
  padding-left: 1px;
`;
const Rule = styled.hr`
  width: 100%;
  height: 1px;
  margin: 5px 0 4px;
  border: 0;
  background: ${c.frame};
`;

const Triple = ({ label, values, dim }: { label: string; values: string[]; dim?: boolean }) => (
  <Line $gap={2}>
    {values.map((v, i) => (
      <Field key={i} $w={i ? 20 : 31} $align="right" $bg={dim ? c.panel : undefined} defaultValue={v} aria-label={`${label} ${i + 1}`} />
    ))}
  </Line>
);
const SetLine = ({ label }: { label: string }) => (
  <Line $between><Label>{label}</Label><Pill $w={26} $dim>Set</Pill></Line>
);

const Editor = styled.div`
  display: flex;
  flex: 1;
  min-width: 0;
  margin-left: 3px;
`;
const KeysSide = styled.div`
  display: flex;
  flex-direction: column;
  width: 168px;
  flex: none;
`;
const KeysHead = styled.div`
  display: flex;
  flex-direction: column;
  justify-content: space-between;
  height: 64px;
  padding: 3px;
  background: ${c.panel};
`;
const KeysHeadEnd = styled.div`
  display: flex;
  justify-content: flex-end;
`;
const Keys = styled.div`
  height: 102px;
  display: flex;
  flex-direction: column;
  border-right: 1px solid #2c2c2c;
`;
const KeyRow = styled.div<{ $h: number }>`
  display: flex;
  align-items: ${(p) => (p.$h === 18 ? "flex-end" : "flex-start")};
  height: ${(p) => p.$h}px;
  overflow: hidden;
  background: ${c.panel};
  border-bottom: 1px solid ${c.frame};
`;
const KeyName = styled.span<{ $line: number }>`
  flex: 1;
  padding-left: 2px;
  line-height: ${(p) => p.$line}px;
  white-space: nowrap;
`;
const Key = styled.span<{ $black?: boolean }>`
  align-self: stretch;
  width: 20px;
  background: ${(p) => (p.$black ? "#000" : "#fff")};
`;
const VelScale = styled.div`
  display: flex;
  align-items: flex-end;
  flex: 1;
  margin-top: 4px;
  padding-left: 3px;
  background: ${c.panel};
`;
const VelPlay = styled.div`
  flex: 1;
  padding-bottom: 2px;
`;
const VelLabels = styled.div`
  display: flex;
  flex-direction: column;
  justify-content: space-between;
  align-items: flex-end;
  height: 39px;
  margin-right: 3px;
  line-height: 13px;
`;
const Roll = styled.div`
  display: flex;
  flex-direction: column;
  flex: 1;
  min-width: 0;
  position: relative;
  border-right: 1px solid #2c2c2c;
`;
const rollLines = "repeating-linear-gradient(90deg, rgba(0, 0, 0, 0.1) 0 1px, transparent 1px 6.25%)";
const rollBeats = "repeating-linear-gradient(90deg, #9d9d9d 0 12.5%, #a4a4a4 12.5% 25%)";
const RollRuler = styled.div`
  display: flex;
  align-items: flex-end;
  height: 20px;
  border-bottom: 1px solid #333;
  background: repeating-linear-gradient(90deg, #333 0 1px, transparent 1px 3.125%) bottom / 100% 2px no-repeat, ${rollBeats};
`;
const RollMark = styled(Mark)`
  height: 13px;
  line-height: 14px;
`;
const RollBar = styled.div`
  display: flex;
  justify-content: space-between;
  height: 12px;
  background: ${c.panel};
  border-bottom: 1px solid #4a4a4a;
`;
const RollScrub = styled.div`
  height: 20px;
  background: ${rollLines}, #6b6b6b;
  border-bottom: 1px solid ${c.frame};
`;
const RollRow = styled.div<{ $h: number; $black?: boolean }>`
  height: ${(p) => p.$h}px;
  background: ${rollLines}, ${(p) => (p.$black ? "linear-gradient(rgba(0, 0, 0, 0.09), rgba(0, 0, 0, 0.09))," : "")} ${rollBeats};
`;
const Velocity = styled.div`
  flex: 1;
  margin-top: 4px;
  background: ${rollLines}, ${rollBeats};
  svg { overflow: visible; }
`;
const Playhead = styled.span`
  position: absolute;
  left: 87.5%;
  top: 58px;
  margin-left: -4px;
`;

const keyRows = [
  { n: "16", h: 18 },
  { n: "15", h: 24, black: true },
  { n: "14", h: 25 },
  { n: "12", h: 23, black: true },
  { n: "11", h: 12 },
];
const high = [0.5, 1.5, 1.75, 2, 2.25, 2.5, 3.5, 3.75, 4, 4.25, 4.5, 5.5, 5.75, 6, 6.25, 6.5, 7.5];
const low = [0, 1, 3, 5, 7];

function ClipDetail() {
  return (
    <Detail>
      <Info>
        <InfoTitle>MIDI Clip</InfoTitle>
        <InfoText>
          <p>A clip representing a piece of MIDI. Click<br />to select the clip and drag it to a new<br />position. Change clip length by dragging<br />the edges. Selected clips can be edited<br />with any available Edit menu commands.<br />Clip properties can be edited in the Clip<br />View, which will open when the clip is<br />double-clicked.</p>
          <p>[Shift + Option + Drag] Slide Notes</p>
        </InfoText>
      </Info>
      <ClipFrame>
        <ClipColumn>
          <BoxHead><Round $size={14} $bg={c.orange} $line={c.frame} aria-label="Clip activator" /><BoxTitle>Clip</BoxTitle></BoxHead>
          <ClipBody>
            <Field aria-label="Clip name" />
            <SelectBox $bg={c.blue}><Select aria-label="Clip color" /><ArrowOver $right={2}><Down /></ArrowOver></SelectBox>
            <Label $line={18}>Signature</Label>
            <Line $between>
              <Field $w={32} defaultValue="4" aria-label="Numerator" />/<Field $w={32} defaultValue="4" aria-label="Denominator" />
            </Line>
            <GrooveLine $between>
              <Label>Groove</Label>
              <Round $size={14} $bg={c.light} $line={c.frame} aria-label="Hot-swap groove"><svg width="10" height="10" fill="none" stroke="#000" strokeWidth="1.500"><path d="M4 1.500A3.700 3.700 0 0 0 2.500 7.500M6 8.500A3.700 3.700 0 0 0 7.500 2.500" /></svg></Round>
            </GrooveLine>
            <Field $bg={c.panel} $align="left" defaultValue="None" aria-label="Groove" />
            <Pill $dim>Commit</Pill>
            <NudgeLine><Pill $dim $shape="7px 0 0 7px">&lt;&lt;</Pill><Pill $dim $shape="0 7px 7px 0">&gt;&gt;</Pill></NudgeLine>
          </ClipBody>
          <TabRow>
            <Round $size={15} $bg={c.orange} aria-label="Notes box"><svg width="9" height="9"><path d="M3 7.500V1h5v6M3 2.500h5" fill="none" stroke="#5a3c0a" /><circle cx="2" cy="7.500" r="1.300" fill="#5a3c0a" /><circle cx="7" cy="7" r="1.300" fill="#5a3c0a" /></svg></Round>
            <Round $size={15} $bg="#1e1e1e" aria-label="Envelopes box"><svg width="9" height="9" fill="#777"><path d="M2 7l5-5" stroke="#777" strokeWidth="1.400" /><circle cx="2" cy="7" r="1.500" /><circle cx="7" cy="2" r="1.500" /></svg></Round>
          </TabRow>
        </ClipColumn>
        <NotesColumn>
          <BoxHead>
            <BoxTitle>Notes</BoxTitle>
            <Round $size={15} $bg={c.orange} $line={c.frame} aria-label="Show expression"><svg width="9" height="8"><path d="M0 4h5" stroke="#000" strokeWidth="1.800" /><path d="M4 0l5 4-5 4z" /></svg></Round>
          </BoxHead>
          <NotesBody>
            <NotesLeft>
              <Field defaultValue="C1-C2" aria-label="Note range" />
              <Line><Pill>:2</Pill><Pill>*2</Pill></Line>
              <Line><Pill>Rev</Pill><Pill>Inv</Pill></Line>
              <Pill>Legato</Pill>
              <Pill>Dupl.Region</Pill>
              <PgmLabel>Pgm Change</PgmLabel>
              <Field $align="left" defaultValue="Bank ---" aria-label="Bank" />
              <Field $align="left" defaultValue="Sub ---" aria-label="Sub-bank" />
              <Field $align="left" defaultValue="Pgm ---" aria-label="Program" />
            </NotesLeft>
            <NotesRight>
              <SetLine label="Start" />
              <Triple label="Start" values={["1", "1", "1"]} />
              <SetLine label="End" />
              <Triple label="End" values={["3", "1", "1"]} />
              <Rule />
              <Toggle>Loop</Toggle>
              <SetLine label="Position" />
              <Triple label="Position" values={["1", "1", "1"]} dim />
              <SetLine label="Length" />
              <Triple label="Length" values={["2", "0", "0"]} dim />
            </NotesRight>
          </NotesBody>
        </NotesColumn>
        <Editor>
          <KeysSide>
            <KeysHead>
              <Toggle $w={30}>Fold</Toggle>
              <KeysHeadEnd><Headphones size={14} /></KeysHeadEnd>
            </KeysHead>
            <Keys>
              {keyRows.map((k) => <KeyRow key={k.n} $h={k.h}><KeyName $line={k.h === 18 ? 22 : 25}>ClosedHH Acoustified {k.n}</KeyName><Key $black={k.black} /></KeyRow>)}
            </Keys>
            <VelScale>
              <VelPlay><Round $size={12} $bg={c.light} $line="#333" aria-label="Lane selector"><svg width="6" height="7"><path d="M0 0l6 3.500L0 7z" /></svg></Round></VelPlay>
              <VelLabels><span>127</span><span>1</span></VelLabels>
              <svg width="7" height="39"><path d="M1 1h5.500v37H1M3 21h4" fill="none" stroke="#141414" strokeWidth="1.500" /></svg>
            </VelScale>
          </KeysSide>
          <Roll>
            <RollRuler>{labels.map((l) => <RollMark key={l} $w="12.5%">{l}</RollMark>)}</RollRuler>
            <RollBar><Brace /><Brace flip /></RollBar>
            <RollBar><Brace /><Brace flip /></RollBar>
            <RollScrub />
            {keyRows.map((k) => <RollRow key={k.n} $h={k.h} $black={k.black} />)}
            <Velocity>
              <svg width="100%" height="39" stroke="#f03b26" strokeWidth="2">
                {high.map((b) => (
                  <g key={b}>
                    <line x1={beatX(b)} x2={beatX(b)} y1="12" y2="39" />
                    <circle cx={beatX(b)} cy="10" r="2.500" fill="#c9b0ab" />
                    {(b === 2 || b === 4 || b === 6) && <circle cx={beatX(b)} cy="22" r="2.500" fill="#f03b26" />}
                  </g>
                ))}
                {low.map((b) => (
                  <g key={b}>
                    <line x1={beatX(b)} x2={beatX(b)} y1="24" y2="39" />
                    <circle cx={beatX(b)} cy="22" r="2.500" fill="#c9b0ab" />
                  </g>
                ))}
              </svg>
            </Velocity>
            <Playhead><Down w={8} h={5} fill={c.sky} /></Playhead>
            <Quantum $right={2} $bottom={2}>1/8</Quantum>
          </Roll>
        </Editor>
      </ClipFrame>
    </Detail>
  );
}

/* ---------- status bar ---------- */

const Status = styled.footer`
  display: flex;
  align-items: flex-start;
  gap: 9px;
  height: 42px;
`;
const StatusRound = styled.div`
  padding-top: 10px;
`;
const StatusEnd = styled(StatusRound)`
  width: 21px;
`;
const StatusBox = styled.div`
  flex: 1;
  height: 24px;
  margin-top: 9px;
  border: 3px solid ${c.frame};
  border-radius: 4px;
  background: ${c.panel};
`;
const ClipTab = styled.div`
  width: 229px;
  height: 33px;
  padding: 10px 4px 1px 3px;
  background: ${c.frame};
  border-radius: 0 0 4px 4px;
`;
const ClipPreview = styled.div`
  height: 22px;
  border: 2px solid #000;
  background: ${c.light};
`;
const DeviceTab = styled.div`
  display: flex;
  align-items: center;
  justify-content: space-between;
  width: 149px;
  height: 24px;
  margin-top: 9px;
  padding: 0 3px 0 5px;
  background: ${c.frame};
  border-radius: 4px;
`;
const Up = () => <svg width="13" height="12"><path d="M6.500 0L13 12H0z" fill="#747474" /></svg>;

function StatusBar() {
  return (
    <Status>
      <StatusRound><Round $size={21} $bg={c.frame} aria-label="Hide info view"><Up /></Round></StatusRound>
      <StatusBox />
      <ClipTab>
        <ClipPreview>
          <svg width="100%" height="18" fill="#222">
            {hatStarts.map((b) => (
              <g key={b}>
                <rect x={beatX(b)} y="1" width="3%" height="1" /><rect x={beatX(b + 0.5)} y="1" width="3%" height="1" />
                <rect x={beatX(b + 0.25)} y="10" width="3%" height="1" /><rect x={beatX(b + 0.75)} y="10" width="3%" height="1" />
              </g>
            ))}
            <rect x="0" y="15" width="100%" height="1" />
          </svg>
        </ClipPreview>
      </ClipTab>
      <DeviceTab>
        4 Hihat
        <svg width="98" height="18">
          <rect width="98" height="18" fill="#8e8e8e" />
          <path d="M3 3h22M3 7h22M3 11h22" stroke="#7a7a7a" strokeWidth="2" strokeDasharray="4 2" />
          <path d="M1 0v18" stroke="#c9a45a" strokeDasharray="2 3" />
          <path d="M3 15.500h22" stroke="#bcbcbc" strokeWidth="2" strokeDasharray="2 1" />
          <rect x="27" y="2" width="69" height="13" fill="#2d3c44" />
          <rect x="31" y="2" width="64" height="10" fill="#457186" />
          <path d="M31 4l18 3 45 .5v1L49 9l-18 1z" fill="#dfa944" />
          <path d="M33 13.500h12" stroke="#84d3fc" strokeDasharray="3 1" />
          <path d="M55 17h40" stroke="#666" strokeDasharray="4 2" />
        </svg>
      </DeviceTab>
      <StatusEnd><Round $size={21} $bg={c.frame} aria-label="Hide detail view"><Up /></Round></StatusEnd>
    </Status>
  );
}

export default function App() {
  return (
    <>
      <Global />
      <Page>
        <TopBar />
        <Workspace>
          <BrowserPane />
          <ArrangementPane />
        </Workspace>
        <ClipDetail />
        <StatusBar />
      </Page>
    </>
  );
}
